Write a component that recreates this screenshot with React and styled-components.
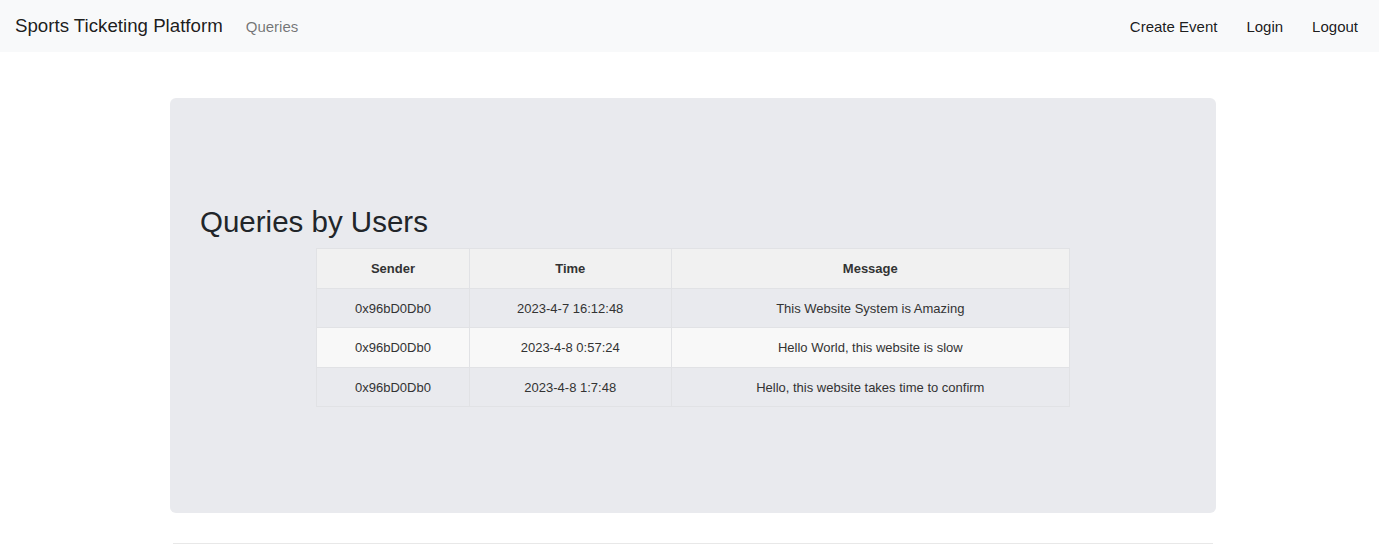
import React from 'react';
import styled, { createGlobalStyle } from 'styled-components';

const GlobalStyle = createGlobalStyle`
    * { box-sizing: border-box; }
    body {
        margin: 0;
        background: #ffffff;
        font-family: "Liberation Sans", Arial, sans-serif;
        color: #212529;
    }
`

const Navbar = styled.nav`
    height: 52px;
    margin-right: 5px;
    background-color: #f8f9fa;
    display: flex;
    align-items: center;
    justify-content: space-between;
    padding: 0 21px 0 15px;
`
const NavLeft = styled.div`
    display: flex;
    align-items: center;
`
const Brand = styled.a`
    font-size: 18.7px;
    color: rgba(0,0,0,0.9);
    text-decoration: none;
    margin-right: 23px;
`
const NavLinks = styled.div`
    display: flex;
    align-items: center;
    gap: 29px;
`
const NavLink = styled.a`
    font-size: 15px;
    text-decoration: none;
    color: ${props => props.muted ? 'rgba(0,0,0,0.55)' : 'rgba(0,0,0,0.9)'};
`

const Jumbotron = styled.section`
    margin: 46px 0 0 170px;
    width: 1046px;
    background-color: #e9eaee;
    border-radius: 6px;
    padding: 106px 30px;
`
const Heading = styled.h2`
    margin: 0 0 8.5px;
    font-size: 29.5px;
    font-weight: 500;
    line-height: 1.2;
    color: #212529;
`
const Table = styled.table`
    width: 754px;
    margin: 0 auto;
    border-collapse: collapse;
    font-family: "Liberation Sans", Arial, sans-serif;
    font-size: 13px;
    color: #333;
`
const Th = styled.th`
    height: 40px;
    width: ${props => props.w}px;
    background-color: #f1f1f1;
    border: 1px solid #e1e2e5;
    font-weight: bold;
    text-align: center;
`
const Row = styled.tr`
    background-color: ${props => props.light ? '#f8f8f8' : '#e9eaee'};
`
const Td = styled.td`
    height: 39.5px;
    border: 1px solid #e1e2e5;
    text-align: center;
`
const Divider = styled.hr`
    margin: 30px 0 0 173px;
    width: 1040px;
    border: 0;
    border-top: 1px solid #e8e8e8;
`

const queries = [
    { sender: '0x96bD0Db0', time: '2023-4-7 16:12:48', message: 'This Website System is Amazing' },
    { sender: '0x96bD0Db0', time: '2023-4-8 0:57:24', message: 'Hello World, this website is slow' },
    { sender: '0x96bD0Db0', time: '2023-4-8 1:7:48', message: 'Hello, this website takes time to confirm' },
]

const App = () => {
    return (
        <>
            <GlobalStyle />
            <Navbar>
                <NavLeft>
                    <Brand href="#">Sports Ticketing Platform</Brand>
                    <NavLink muted href="#">Queries</NavLink>
                </NavLeft>
                <NavLinks>
                    <NavLink href="#">Create Event</NavLink>
                    <NavLink href="#">Login</NavLink>
                    <NavLink href="#">Logout</NavLink>
                </NavLinks>
            </Navbar>
            <Jumbotron>
                <Heading>Queries by Users</Heading>
                <Table>
                    <thead>
                        <tr>
                            <Th w={153}>Sender</Th>
                            <Th w={202}>Time</Th>
                            <Th w={399}>Message</Th>
                        </tr>
                    </thead>
                    <tbody>
                        {queries.map((q, i) => (
                            <Row key={i} light={i % 2 === 1}>
                                <Td>{q.sender}</Td>
                                <Td>{q.time}</Td>
                                <Td>{q.message}</Td>
                            </Row>
                        ))}
                    </tbody>
                </Table>
            </Jumbotron>
            <Divider />
        </>
    )
}

export default App
